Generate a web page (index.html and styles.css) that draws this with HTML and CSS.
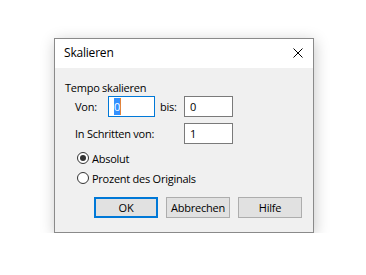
FILE: index.html
```html
<!doctype html>
<html lang="de">
  <head>
    <meta charset="UTF-8" />
    <title>Skalieren</title>
    <link rel="stylesheet" href="styles.css">
  </head>
  <body>
    <div class="dialog">
      <div class="titlebar">
        <span class="title">Skalieren</span>
        <svg class="close" width="10" height="10" viewBox="0 0 10 10">
          <path d="M0.5 0.5 L9.5 9.5 M9.5 0.5 L0.5 9.5" stroke="#000" stroke-width="1" fill="none" />
        </svg>
      </div>
      <div class="content">
        <div class="group-label">Tempo skalieren</div>
        <div class="row">
          <span class="label von">Von:</span>
          <span class="field focused short"><span class="sel">0</span></span>
          <span class="label bis">bis:</span>
          <span class="field">0</span>
        </div>
        <div class="row second">
          <span class="label schritte">In Schritten von:</span>
          <span class="field">1</span>
        </div>
        <div class="radio first">
          <span class="dot checked"></span><span>Absolut</span>
        </div>
        <div class="radio">
          <span class="dot"></span><span>Prozent des Originals</span>
        </div>
        <div class="buttons">
          <button class="default">OK</button>
          <button>Abbrechen</button>
          <button>Hilfe</button>
        </div>
      </div>
    </div>
  </body>
</html>
```

FILE: styles.css
```css
body {
  margin: 0;
  background: #ffffff;
  font-family: "Open Sans", sans-serif;
  font-size: 11px;
  letter-spacing: -0.25px;
  color: #000;
}

.dialog {
  box-sizing: border-box;
  width: 260px;
  height: 195px;
  margin: 38px 0 0 54px;
  border: 1px solid #8a8a8a;
  background: #f0f0f0;
  box-shadow: 1px 3px 14px rgba(0, 0, 0, 0.22);
}

.titlebar {
  height: 29px;
  background: #ffffff;
  display: flex;
  align-items: center;
  justify-content: space-between;
  padding: 0 10px 0 9px;
}

.title {
  font-size: 12px;
  letter-spacing: -0.2px;
  padding-bottom: 2px;
}

.close {
  margin-bottom: 1px;
}

.content {
  padding: 11px 11px 0 10px;
}

.group-label {
  height: 17px;
  line-height: 17px;
}

.row {
  display: flex;
  align-items: center;
  padding-left: 10px;
  height: 21px;
}

.row.second {
  margin-top: 6px;
}

.label.von {
  width: 33px;
}

.label.bis {
  width: 24px;
  margin-left: 5px;
}

.label.schritte {
  width: 109px;
}

.field {
  box-sizing: border-box;
  width: 49px;
  height: 21px;
  border: 1px solid #7a7a7a;
  background: #fff;
  padding-left: 5px;
  line-height: 19px;
}

.field.short {
  width: 47px;
}

.field.focused {
  border-color: #0078d7;
}

.sel {
  background: #3391ff;
  color: #ffffff;
  border-right: 1px solid #e0823c;
  padding: 1px 0;
}

.radio {
  display: flex;
  align-items: center;
  height: 16px;
  padding-left: 12px;
  margin-top: 4px;
}

.radio.first {
  margin-top: 6px;
}

.dot {
  box-sizing: border-box;
  width: 12px;
  height: 12px;
  border: 1px solid #333;
  border-radius: 50%;
  background: #fff;
  margin-right: 3px;
  display: flex;
  align-items: center;
  justify-content: center;
}

.dot.checked::after {
  content: "";
  width: 6px;
  height: 6px;
  border-radius: 50%;
  background: #333;
}

.buttons {
  display: flex;
  justify-content: flex-end;
  gap: 8px;
  margin-top: 11px;
}

button {
  box-sizing: border-box;
  width: 64px;
  height: 21px;
  border: 1px solid #adadad;
  background: #e1e1e1;
  font-family: inherit;
  font-size: 11px;
  letter-spacing: -0.25px;
  color: #000;
  padding: 0;
}

button.default {
  border: 2px solid #0078d7;
}
```
